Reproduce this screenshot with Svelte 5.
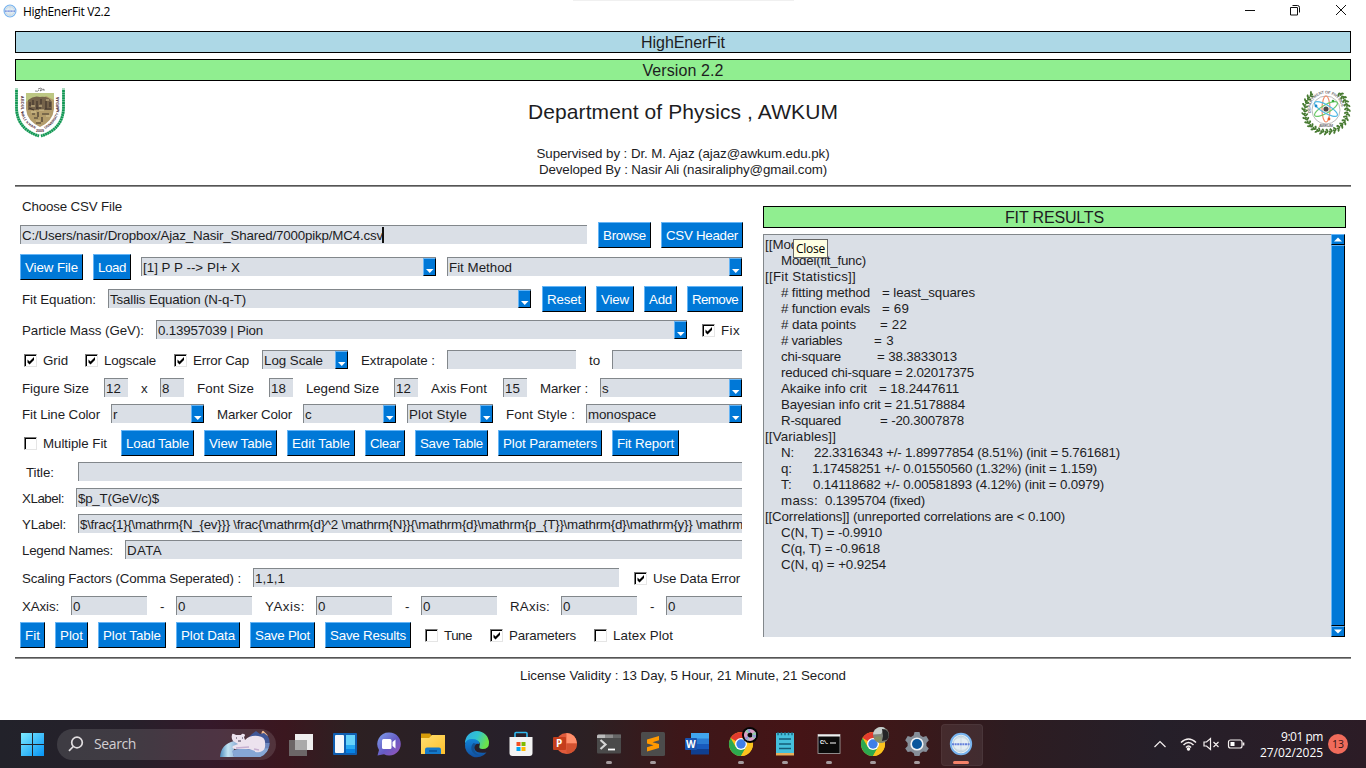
<script>
  // Spreads the letters of a text so that its line has the given width.
  function fit(node, width) {
    const set = (w) => {
      node.style.letterSpacing = '0px';
      const n = node.textContent.length;
      const natural = node.getBoundingClientRect().width;
      node.style.letterSpacing = (w - natural) / n + 'px';
    };
    set(width);
    return { update: set };
  }

  // Each item: [kind, left, right, text, text width]
  const rows = [
    { top: 0, items: [['label', 22, 122, 'Choose CSV File']] },
    { top: 3, items: [['caret', 20, 587, 'C:/Users/nasir/Dropbox/Ajaz_Nasir_Shared/7000pikp/MC4.csv', 361], ['btn', 598, 651, 'Browse'], ['btn', 661, 743, 'CSV Header']] },
    { top: 6, items: [['btn', 20, 83, 'View File'], ['btn', 93, 131, 'Load'], ['combo', 141, 436, '[1] P P --> PI+ X', 97], ['combo', 447, 742, 'Fit Method', 63]] },
    { top: 6, items: [['label', 22, 96, 'Fit Equation:'], ['combo', 108, 531, 'Tsallis Equation (N-q-T)', 136], ['btn', 542, 586, 'Reset'], ['btn', 596, 634, 'View'], ['btn', 644, 677, 'Add'], ['btn', 687, 743, 'Remove']] },
    { top: 5, items: [['label', 22, 144, 'Particle Mass (GeV):'], ['combo', 156, 687, '0.13957039 | Pion', 105], ['on', 702, 715], ['label', 721, 740, 'Fix']] },
    { top: 4, items: [['on', 24, 37], ['label', 43, 68, 'Grid'], ['on', 85, 98], ['label', 104, 156, 'Logscale'], ['on', 174, 187], ['label', 193, 249, 'Error Cap'], ['combo', 262, 348, 'Log Scale', 59], ['label', 361, 435, 'Extrapolate :'], ['field', 447, 576, ''], ['label', 589, 600, 'to'], ['field', 612, 742, '']] },
    { top: 2, items: [['label', 22, 89, 'Figure Size'], ['field', 104, 128, '12', 15], ['label', 141, 148, 'x'], ['field', 160, 184, '8', 8], ['label', 197, 254, 'Font Size'], ['field', 269, 293, '18', 15], ['label', 306, 379, 'Legend Size'], ['field', 394, 418, '12', 15], ['label', 431, 487, 'Axis Font'], ['field', 503, 527, '15', 15], ['label', 540, 588, 'Marker :'], ['combo', 600, 742, 's', 7]] },
    { top: 0, items: [['label', 22, 100, 'Fit Line Color'], ['combo', 111, 204, 'r', 5], ['label', 217, 292, 'Marker Color'], ['combo', 303, 396, 'c', 7], ['combo', 407, 493, 'Plot Style', 58], ['label', 506, 575, 'Font Style :'], ['combo', 586, 742, 'monospace', 68]] },
    { top: 3, items: [['off', 24, 37], ['label', 43, 107, 'Multiple Fit'], ['btn', 121, 194, 'Load Table'], ['btn', 204, 277, 'View Table'], ['btn', 287, 355, 'Edit Table'], ['btn', 365, 405, 'Clear'], ['btn', 415, 488, 'Save Table'], ['btn', 498, 602, 'Plot Parameters'], ['btn', 612, 679, 'Fit Report']] },
    { top: 3, items: [['label', 26, 54, 'Title:'], ['field', 78, 742, '']] },
    { top: 0, items: [['label', 22, 64, 'XLabel:'], ['field', 76, 742, '$p_T(GeV/c)$', 81]] },
    { top: 0, items: [['label', 22, 66, 'YLabel:'], ['field', 78, 742, '$\\frac{1}{\\mathrm{N_{ev}}} \\frac{\\mathrm{d}^2 \\mathrm{N}}{\\mathrm{d}\\mathrm{p_{T}}\\mathrm{d}\\mathrm{y}} \\mathrm', 663]] },
    { top: 0, items: [['label', 22, 113, 'Legend Names:'], ['field', 125, 742, 'DATA', 35]] },
    { top: 2, items: [['label', 22, 241, 'Scaling Factors (Comma Seperated) :'], ['field', 253, 619, '1,1,1', 30], ['on', 634, 647], ['label', 653, 740, 'Use Data Error']] },
    { top: 2, items: [['label', 22, 59, 'XAxis:'], ['field', 71, 147, '0', 8], ['label', 160, 165, '-'], ['field', 176, 252, '0', 8], ['label', 265, 305, 'YAxis:'], ['field', 316, 392, '0', 8], ['label', 405, 410, '-'], ['field', 421, 497, '0', 8], ['label', 510, 550, 'RAxis:'], ['field', 561, 637, '0', 8], ['label', 650, 655, '-'], ['field', 666, 742, '0', 8]] },
    { top: 3, items: [['btn', 20, 45, 'Fit'], ['btn', 55, 88, 'Plot'], ['btn', 98, 166, 'Plot Table'], ['btn', 176, 240, 'Plot Data'], ['btn', 250, 315, 'Save Plot'], ['btn', 325, 411, 'Save Results'], ['off', 425, 438], ['label', 444, 472, 'Tune'], ['on', 490, 503], ['label', 509, 576, 'Parameters'], ['off', 594, 607], ['label', 613, 673, 'Latex Plot']] }
  ];

  // Each line is a list of pieces: [left, right, text]
  const report = [
    [[765, 816, '[[Model]]']],
    [[781, 866, 'Model(fit_func)']],
    [[765, 856, '[[Fit Statistics]]']],
    [[781, 870, '# fitting method'], [882, 975, '= least_squares']],
    [[781, 870, '# function evals'], [882, 909, '= 69']],
    [[781, 856, '# data points'], [880, 907, '= 22']],
    [[781, 842, '# variables'], [874, 894, '= 3']],
    [[781, 841, 'chi-square'], [877, 957, '= 38.3833013']],
    [[781, 974, 'reduced chi-square = 2.02017375']],
    [[781, 867, 'Akaike info crit'], [879, 959, '= 18.2447611']],
    [[781, 965, 'Bayesian info crit = 21.5178884']],
    [[781, 841, 'R-squared'], [880, 964, '= -20.3007878']],
    [[765, 836, '[[Variables]]']],
    [[781, 794, 'N:'], [814, 1120, '22.3316343 +/- 1.89977854 (8.51%) (init = 5.761681)']],
    [[781, 792, 'q:'], [812, 1097, '1.17458251 +/- 0.01550560 (1.32%) (init = 1.159)']],
    [[781, 792, 'T:'], [813, 1104, '0.14118682 +/- 0.00581893 (4.12%) (init = 0.0979)']],
    [[781, 818, 'mass:'], [825, 925, '0.1395704 (fixed)']],
    [[765, 1065, '[[Correlations]] (unreported correlations are < 0.100)']],
    [[781, 882, 'C(N, T) = -0.9910']],
    [[781, 880, 'C(q, T) = -0.9618']],
    [[781, 886, 'C(N, q) = +0.9254']]
  ];

  const gap = (list, i, first, at) => list[i][at] - (i ? list[i - 1][at + 1] : first);
  const leaves = Array.from({ length: 25 }, (_, i) => -48 + i * 11.5);
</script>

{#snippet chrome()}
  <circle cx="12" cy="12" r="12" fill="#fbc116" />
  <path d="M12 12 1.6 6A12 12 0 0 1 22.4 6H12z" fill="#e33b2e" />
  <path d="M1.6 6A12 12 0 0 0 12 24l5.2-9L12 12 6.8 15z" fill="#2da94f" />
  <path d="M12 6h10.4A12 12 0 0 1 12 24l5.2-9z" fill="#fcc31e" />
  <circle cx="12" cy="12" r="6" fill="#fff" />
  <circle cx="12" cy="12" r="4.7" fill="#3f7fe8" />
{/snippet}

{#snippet appMark()}
  <circle cx="12" cy="12" r="10.2" fill="#e3edf3" stroke="#78b4ef" stroke-width="1.9" />
  <circle cx="12" cy="12" r="7.8" fill="none" stroke="#b4c9d6" stroke-width=".8" />
  <path d="M5 8q7-5 14 0M5 16q7 5 14 0M12 3v18" fill="none" stroke="#c3d3dc" stroke-width=".7" />
  <path d="M3 12.3h18" stroke="#6480dc" stroke-width="2" stroke-dasharray="2 .6" />
{/snippet}

<div class="screen">
  <header class="titlebar">
    <svg class="mark" viewBox="0 0 24 24">{@render appMark()}</svg>
    <span class="caption"><span use:fit={87}>HighEnerFit V2.2</span></span>
    <i class="handle"></i>
    <svg class="winctl" viewBox="0 0 102 12" fill="none" stroke="#111" stroke-width="1">
      <path d="M0 6.5h10" />
      <path d="M45.5 3.5h7v7.500h-7zM47.500 1.500h5q2 0 2 2v5" />
      <path d="m91 1 10 10m0-10-10 10" />
    </svg>
  </header>

  <div class="banner blue"><span use:fit={84}>HighEnerFit</span></div>
  <div class="banner green"><span use:fit={81}>Version 2.2</span></div>

  <section class="about">
    <svg class="shield" viewBox="0 0 50 50">
      <path d="M1.500 1v20Q2 42 24 49M48.500 1v20Q48 42 26 49" fill="none" stroke="#a9dcc0" stroke-width="3" />
      <path d="M1.500 3v18Q2 42 24 49M48.500 3v18Q48 42 26 49" fill="none" stroke="#119653" stroke-width="2.700" stroke-dasharray="1.900 .5" />
      <path d="M20 4q3 1 4-1m1 1q2-1 4-2v2m-6-2 3-1m-1 3 2-3" stroke="#555" fill="none" stroke-width=".7" />
      <path d="M11 6h28v16q-1 12-14 18Q12 34 11 22z" fill="#b39c6a" />
      <path d="M11 6h28v7l-8-4-6 4-7-2-7 4z" fill="#bdc783" />
      <path d="M13 13q6-5 12-3 9-1 12 5v8H13z" fill="#75634a" />
      <path d="M15 15v4m3-6v5m4-4v8m4-10v5m5-3v8m4-7v5M14 21l5 2m2-2h5m4 1h6M17 27h3m3-2v5m4-3h7m-15 4h4m4-1v5m-6 1h5" stroke="#42362d" stroke-width="1.200" fill="none" />
      <path d="M16 19h4m4 0h3m4-6h3m-18 12h5m3-2h5m2 6h4m-14 5h4" stroke="#d8c594" stroke-width="1.200" />
      <path id="motto-left" d="M5.500 9v13Q7 36 20 42" fill="none" />
      <path id="motto-right" d="M30 42Q42 36 44.500 22V7" fill="none" />
      <text class="motto"><textPath href="#motto-left" textLength="39">ABDUL WALI KHAN</textPath></text>
      <text class="motto"><textPath href="#motto-right" textLength="38">UNIVERSITY MARDAN</textPath></text>
      <text class="motto" x="21" y="44.500">2009</text>
    </svg>
    <div class="who">
      <h1><span use:fit={310}>Department of Physics , AWKUM</span></h1>
      <p><span use:fit={293}>Supervised by : Dr. M. Ajaz (ajaz@awkum.edu.pk)</span></p>
      <p><span use:fit={288}>Developed By : Nasir Ali (nasiraliphy@gmail.com)</span></p>
    </div>
    <svg class="physics" viewBox="0 0 50 44">
      {#each leaves as a}
        <g transform="rotate({a} 25 20.500) translate(25 20.500)">
          <path d="M18.500 0q3-3 3.500-.5M20.500 1q3-2 3.500 1" fill="none" stroke="#477a31" stroke-width="1.800" />
        </g>
      {/each}
      <circle cx="25" cy="20.500" r="18" fill="#fff" />
      <circle cx="25" cy="20" r="14" fill="none" stroke="#aaa" stroke-width=".8" />
      <path id="dept" d="M10 23A15.500 15.500 0 1 1 40 23" fill="none" />
      <text class="dept"><textPath href="#dept" textLength="50">DEPARTMENT OF PHYSICS</textPath></text>
      <text class="dept" x="18" y="37" textLength="14">AWKUM</text>
      <g fill="none" stroke-width="1.200">
        <ellipse cx="25" cy="19" rx="4" ry="13" stroke="#f18e69" />
        <ellipse cx="25" cy="19" rx="4" ry="13" stroke="#6cc96a" transform="rotate(60 25 19)" />
        <ellipse cx="25" cy="19" rx="4" ry="13" stroke="#51b9e5" transform="rotate(-60 25 19)" />
      </g>
      <circle cx="25" cy="19" r="2.600" fill="#494949" />
      <circle cx="15" cy="16" r="1.400" fill="#168ad1" /><circle cx="32" cy="11" r="1.300" fill="#38aa39" /><circle cx="28" cy="29" r="1.400" fill="#e9602a" />
    </svg>
  </section>

  <hr />

  <main>
    <section class="form">
      {#each rows as row}
        <div class="row" style="margin-top: {row.top}px">
          {#each row.items as [kind, left, right, text, tw], i}
            <div class="item {kind}" style="margin-left: {gap(row.items, i, 20, 1)}px; width: {right - left}px">
              {#if kind === 'on' || kind === 'off'}
                {#if kind === 'on'}
                  <svg viewBox="0 0 13 13"><path d="M3.500 5.500v3l2 2 4.500-4.500v-3l-4.500 4.500z" fill="#000" /></svg>
                {/if}
              {:else if kind === 'btn'}
                <span use:fit={right - left - 10}>{text}</span>
              {:else if kind === 'label'}
                <span use:fit={right - left}>{text}</span>
              {:else}
                {#if text}<span use:fit={tw}>{text}</span>{/if}
                {#if kind === 'caret'}<i class="bar"></i>{/if}
                {#if kind === 'combo'}
                  <b class="drop"><svg viewBox="0 0 11 16"><path d="M2 10h7.500L5.750 14z" fill="#fff" /></svg></b>
                {/if}
              {/if}
            </div>
          {/each}
        </div>
      {/each}
    </section>

    <section class="results">
      <div class="banner green"><span use:fit={99}>FIT RESULTS</span></div>
      <div class="output">
        <div class="text">
          {#each report as line}
            <div class="line">
              {#each line as [left, right, text], i}
                <span class="piece" style="margin-left: {gap(line, i, 765, 0)}px; width: {right - left}px"><span use:fit={right - left}>{text}</span></span>
              {/each}
            </div>
          {/each}
          <div class="tooltip"><span use:fit={29}>Close</span></div>
        </div>
        <div class="scroll">
          <i><svg viewBox="0 0 12 9"><path d="M2 6.500h8L6 2.500z" fill="#fff" /></svg></i>
          <i class="thumb"></i>
          <i><svg viewBox="0 0 12 9"><path d="M2 2.500h8L6 6.500z" fill="#fff" /></svg></i>
        </div>
      </div>
    </section>
  </main>

  <hr />
  <p class="license"><span use:fit={326}>License Validity : 13 Day, 5 Hour, 21 Minute, 21 Second</span></p>

  <footer>
    <svg class="start" viewBox="0 0 24 24">
      <defs><linearGradient id="win" x1="0" y1="0" x2="24" y2="24" gradientUnits="userSpaceOnUse"><stop stop-color="#83efff" /><stop offset="1" stop-color="#0593f5" /></linearGradient></defs>
      <path d="M1 1h11v11H1zM13 1h11v11H13zM1 13h11v11H1zM13 13h11v11H13z" fill="url(#win)" />
    </svg>
    <div class="search">
      <svg class="lens" viewBox="0 0 16 16" fill="none" stroke="#e2dfe1" stroke-width="1.700"><circle cx="9" cy="6.500" r="5.300" /><path d="m5.300 10.500-4.300 4.300" /></svg>
      <span class="hint"><span use:fit={42}>Search</span></span>
      <svg class="bear" viewBox="0 0 56 30">
        <defs>
          <clipPath id="pill"><path d="M0 0h40a15 15 0 0 1 0 28H0z" /></clipPath>
          <linearGradient id="ice" x2="1"><stop stop-color="#4a8abc" /><stop offset=".4" stop-color="#c3e4f3" /><stop offset="1" stop-color="#7798c8" /></linearGradient>
        </defs>
        <g clip-path="url(#pill)">
          <circle cx="45" cy="4.500" r="3.500" fill="#f4bd91" />
          <path d="m24 13 8-8 4-3 4 3 4-1 5 4 4-1 5 6v4H20z" fill="#405797" />
          <path d="M36 14h20v14H12z" fill="#6c86be" />
          <path d="M0 28q1-13 14-16l6 2q-9 5-6 14z" fill="url(#ice)" />
          <path d="M12 22q7-4 19-1l20-2-5 9H14z" fill="#86a7d5" />
        </g>
        <path d="M12 6q0-2 2-1l2 1h5q1-2 3-1t0 3l1 3q5-5 13-4 8 1 7 8 1 6-5 8-6 1-5-1l-6-2-14 0q-4-1-2-3l5-2-5-3q-2-3-1-6z" fill="#ece2ee" />
        <path d="M16 19l13-1M34 20l5 1" stroke="#c6afd0" stroke-width="1.300" fill="none" />
        <path d="M18 12h3m-5-3h1m5 0h1" stroke="#3e344d" stroke-width="1.200" />
      </svg>
    </div>

    <nav>
      <div class="slot"><svg viewBox="0 0 24 24"><path d="M6 2h18v16H6z" fill="#eee" /><path d="M0 8h18v16H0z" fill="#777" opacity=".82" /><path d="M6 8h12v10H6z" fill="#aaa" /></svg></div>
      <div class="slot"><svg viewBox="0 0 24 24"><rect y="1" width="24" height="22" rx="1" fill="#0f5eb0" /><rect x="2" y="3" width="9" height="18" rx="1" fill="#f6f8fb" /><path d="M13 3h9v10h-9z" fill="#67d3fa" /><path d="M13 13h9v4h-9z" fill="#27aaf2" /><path d="M13 17h9v4h-9z" fill="#0784e5" /></svg></div>
      <div class="slot"><svg viewBox="0 0 24 24"><defs><linearGradient id="chat" x2="1" y2="1"><stop stop-color="#7ea1ed" /><stop offset=".55" stop-color="#665bc4" /><stop offset="1" stop-color="#9c53b8" /></linearGradient></defs><path d="M12 .5a11.500 11.500 0 1 1-5 21.700L.5 23.500 2 18A11.500 11.500 0 0 1 12 .5z" fill="url(#chat)" /><rect x="5" y="7" width="9.500" height="10" rx="1.500" fill="#fff" /><path d="m15.500 10 3-2.500v9l-3-2.500z" fill="#fff" /></svg></div>
      <div class="slot"><svg viewBox="0 0 24 24"><defs><linearGradient id="dir" x2="1" y2="1"><stop stop-color="#ffdf72" /><stop offset="1" stop-color="#ffc02b" /></linearGradient></defs><path d="M0 1.500h9l2 2.500V8H0z" fill="#d79b08" /><path d="M0 6h8l3-3h13v19H0z" fill="url(#dir)" /><path d="M4 22v-4.500q0-2 2-2h12q2 0 2 2V22z" fill="#1479c9" /><path d="M8 19h8" stroke="#0a4f94" stroke-width="1.500" /></svg></div>
      <div class="slot"><svg viewBox="0 0 24 24"><defs><linearGradient id="edge" x2="1" y2=".35"><stop stop-color="#2fa9e7" /><stop offset=".55" stop-color="#31c4cf" /><stop offset="1" stop-color="#6be34b" /></linearGradient><linearGradient id="edge2" x2="0" y2="1"><stop stop-color="#1284d8" /><stop offset="1" stop-color="#1250a0" /></linearGradient></defs><path d="M0 11A12 12 0 0 1 24 11q0 6-6.500 6-4 0-3-3 2-5-5-5.500Q4 8 0 11z" fill="url(#edge)" /><path d="M0 12q1-5 7-5 7 0 7.500 5-7-1-5 5 2 5 12 3.500A12 12 0 0 1 0 12z" fill="url(#edge2)" /><path d="M8.500 11q-4 4-1 9 4 5 11 2.500-5 2-8-2-3-5 1-8.500z" fill="#125294" /></svg></div>
      <div class="slot"><svg viewBox="0 0 24 24"><path d="M6 6V1.500q0-1 1-1h10q1 0 1 1V6" fill="none" stroke="#30b9ef" stroke-width="1.600" /><path d="M.5 5h23v16q0 3-3 3h-17q-3 0-3-3z" fill="#f3f3f3" /><path d="M7.500 10h4v4h-4z" fill="#f25022" /><path d="M12.500 10h4v4h-4z" fill="#7fba00" /><path d="M7.500 15h4v4h-4z" fill="#00a4ef" /><path d="M12.500 15h4v4h-4z" fill="#ffb900" /></svg></div>
      <div class="slot"><svg viewBox="0 0 24 24"><circle cx="13.500" cy="11.500" r="10.500" fill="#e05b3c" /><path d="M13.500 1A10.500 10.500 0 0 1 24 11.500H13.500z" fill="#ff8f6b" /><path d="M13.500 11.500H24A10.500 10.500 0 0 1 13.500 22z" fill="#d35230" /><rect y="5" width="13" height="13" rx="1" fill="#c43e1c" /><text class="letter" x="3" y="15">P</text></svg></div>
      <div class="slot run"><svg viewBox="0 0 24 24"><rect y="2.500" width="24" height="19" rx="1" fill="#4a4a4a" /><path d="M0 6V4q0-1.500 1.500-1.500H8V6z" fill="#bbb" /><path d="M8 2.500h8V6H8z" fill="#8c8c8c" /><path d="M16 2.500h8V6h-8z" fill="#666" /><path d="m3.500 8 5 4.500-5 4.500" fill="none" stroke="#d5d5d5" stroke-width="2.200" /><path d="M11 17.500h7" stroke="#fff" stroke-width="1.800" /></svg></div>
      <div class="slot run"><svg viewBox="0 0 24 24"><rect width="24" height="24" rx="1.500" fill="#4c4c4c" /><path d="M18 4v4.200L11.500 10.200 18 12v4L6 19.500v-4.200l6.500-2L6 11.500v-4z" fill="#ff9800" /></svg></div>
      <div class="slot"><svg viewBox="0 0 24 24"><path d="M6 1h18v6H6z" fill="#41a5ee" /><path d="M6 6.500h18V12H6z" fill="#2b7cd3" /><path d="M6 12h18v5.500H6z" fill="#185abd" /><path d="M6 17h18v5.500H6z" fill="#103f91" /><rect y="6" width="12" height="12" rx="1" fill="#1853ae" /><text class="letter" x="1" y="15.500">W</text></svg></div>
      <div class="slot run"><svg viewBox="0 0 24 24">{@render chrome()}<circle cx="21" cy="3" r="8" fill="#050505" /><circle cx="21" cy="3" r="4.300" fill="none" stroke="#d9a0c5" stroke-width="3.600" /><circle cx="21" cy="3" r="4.300" fill="none" stroke="#8fcbab" stroke-width="3.600" stroke-dasharray="3 5" /><circle cx="21" cy="3" r="4.300" fill="none" stroke="#9a91dd" stroke-width="3.600" stroke-dasharray="2 7" /></svg></div>
      <div class="slot run"><svg viewBox="0 0 24 24"><path d="M3 1h18v21H3z" fill="#45bfdc" /><path d="M3 21h18v2.500H3z" fill="#e9ad59" /><path d="M6 7h12M6 12h12M6 16.500h12" stroke="#145c78" stroke-width="1.400" /><path d="M5 .2v3m3.500-3v3m3.500-3v3m3.500-3v3m3.500-3v3" stroke="#1b6c86" stroke-width="1.500" /></svg></div>
      <div class="slot run"><svg viewBox="0 0 24 24"><rect x="1" y="2.500" width="22" height="19" fill="#0a0a0a" stroke="#aaa" stroke-width=".8" /><path d="M1 3.500h22" stroke="#eee" stroke-width="2" /><text class="prompt" x="3" y="11.500" textLength="9">C:\.</text><path d="M13 11h6" stroke="#fff" /></svg></div>
      <div class="slot run"><svg viewBox="0 0 24 24">{@render chrome()}<circle cx="20" cy="3" r="8" fill="#80857b" /><path d="M12 2.500A8 8 0 0 1 24-3.800L20 2z" fill="#c6cdcb" /><path d="M21-3q4 0 6 3 2 5-1.500 8L21 9l1-5z" fill="#242526" /><path d="M13 6q4-3 7-1l1 6q-6 0-8-5z" fill="#879064" /></svg></div>
      <div class="slot run"><svg viewBox="0 0 24 24"><path d="m9.500 0-.8 3.300L6 5 2.700 4 .2 8.300 2.600 11v3L.2 16.500 2.700 20 6 19.500l2.700 1.700.8 2.800h5l.8-2.800 2.700-1.700 3.300.5 2.500-3.500-2.400-2.500v-3l2.400-2.700L21.300 4 18 5l-2.700-1.700L14.500 0z" fill="#858e98" /><circle cx="12" cy="12" r="6.600" fill="#eef2f5" /><circle cx="12" cy="12" r="5" fill="#08569c" /></svg></div>
      <div class="slot active"><svg viewBox="0 0 24 24">{@render appMark()}</svg></div>
    </nav>

    <div class="tray">
      <svg class="tray-icons" viewBox="0 0 92 16" fill="none" stroke="#f4efef" stroke-width="1.200">
        <path d="m1.500 11 5.500-5.500L12.500 11" />
        <path d="M28 6.500q7.500-7 15 0M30.500 9q5-5 10 0M33 11.500q2.500-2.800 5 0" stroke-width="1.500" />
        <circle cx="35.500" cy="13" r="1.200" fill="#fff" />
        <path d="M51 6h2.500l4-3.500v11l-4-3.500H51zM60.500 6l5 5m0-5-5 5" />
        <rect x="75.500" y="4" width="13.500" height="8" rx="2" /><path d="M90.500 6.500v3" stroke-width="1.700" /><path d="M77.500 6h4v4h-4z" fill="#fff" stroke="none" />
      </svg>
      <div class="clock"><span><span use:fit={42}>9:01 pm</span></span><span><span use:fit={63}>27/02/2025</span></span></div>
      <div class="badge">13</div>
    </div>
  </footer>
</div>

<style>
  :global(body) { margin: 0; overflow: hidden; background: #fff; }
  * { box-sizing: border-box; }
  .screen { width: 1366px; height: 768px; display: flex; flex-direction: column; background: #fff; color: #1d1d1f; font: 13.33px/16px "Liberation Sans", Arial, sans-serif; overflow: hidden; }
  span { white-space: pre; display: inline-block; flex: none; }
  svg { display: block; overflow: visible; flex: none; }
  p, h1, hr { margin: 0; }

  .titlebar { height: 31px; padding: 0 19px 0 3px; display: flex; align-items: flex-start; position: relative; flex: none; }
  .mark { width: 14px; height: 14px; margin-top: 4px; }
  .caption { margin: 4px 0 0 6px; flex: 1; font: 12px/16px "Open Sans", sans-serif; color: #000; }
  .winctl { width: 102px; height: 12px; margin-top: 4px; }
  .handle { position: absolute; left: 573px; top: 0; width: 221px; height: 1px; background: #f0f0f0; }

  .banner { height: 22px; margin: 0 15px 6px; border: 1px solid #000; display: flex; justify-content: center; align-items: center; font-size: 16px; line-height: 18px; flex: none; }
  .banner span { padding-top: 2px; }
  .blue { background: #add8e6; }
  .green { background: #90ee90; }

  .about { height: 98px; margin: 0 15px; display: flex; justify-content: space-between; flex: none; }
  .shield { width: 50px; height: 50px; }
  .physics { width: 50px; height: 44px; margin-top: 3px; }
  .motto { font: bold 3.6px "Liberation Sans", sans-serif; fill: #47242b; }
  .dept { font: bold 4px "Liberation Sans", sans-serif; fill: #777; }
  .who { display: flex; flex-direction: column; align-items: center; }
  h1 { font-size: 21px; line-height: 24px; font-weight: 400; margin: 13px 0 22px; }
  hr { height: 2px; border: 0; margin: 0 15px; border-top: 1px solid #555; background: #8c8c8c; flex: none; }

  main { display: flex; gap: 20px; height: 470px; padding: 0 20px; flex: none; }
  .form { width: 723px; padding-top: 6px; flex: none; }
  .row { height: 26px; display: flex; align-items: center; }
  .item { height: 19px; margin-bottom: 1px; flex: none; display: flex; align-items: center; white-space: pre; }
  .item > span { padding-top: 2px; }
  .label > span { padding-top: 3px; }
  .field, .combo, .caret { background: #dadfe6; border-top: 1px solid #82878b; border-left: 1px solid #82878b; padding-left: 1px; overflow: hidden; }
  .bar { width: 2px; height: 16px; background: #111; margin-left: -1px; }
  .btn { height: 26px; margin-bottom: 0; justify-content: center; background: #0078d7; color: #fff; border: 1px solid; border-color: #66b5f6 #000 #000 #66b5f6; }
  .on, .off { height: 13px; margin: 1px 0 0; background: #fff; border: 1px solid; border-color: #777 #e5e5e5 #e5e5e5 #777; box-shadow: inset 1px 1px #000; }
  .on svg { width: 13px; height: 13px; margin-left: -1px; }
  .drop { width: 13px; height: 18px; margin-left: auto; background: #0078d7; border: 1px solid; border-color: #66b5f6 #000 #000 #66b5f6; flex: none; }
  .drop svg { width: 11px; height: 16px; }

  .results { width: 583px; padding-top: 19px; flex: none; }
  .results .banner { margin: 0 0 6px; }
  .output { height: 403px; display: flex; }
  .text { width: 568px; position: relative; background: #dadfe6; border-top: 1px solid #82878b; border-left: 1px solid #82878b; padding: 2px 0 0 1px; }
  .line { display: flex; height: 16px; }
  .tooltip { position: absolute; left: 29px; top: 4px; width: 35px; height: 19px; background: #ffffe1; border: 1px solid #666; font: 12px/18px "Open Sans", sans-serif; color: #000; padding-left: 2px; }
  .scroll { width: 14px; display: flex; flex-direction: column; background: #dadfe6; }
  .scroll i { height: 11px; background: #0078d7; border: 1px solid; border-color: #66b5f6 #000 #000 #66b5f6; }
  .scroll svg { width: 12px; height: 9px; }
  .scroll .thumb { flex: 1; }

  .license { text-align: center; padding-top: 9px; height: 61px; flex: none; }

  footer { height: 48px; flex: none; display: flex; align-items: center; background: linear-gradient(90deg, #22222a 0, #26202a 130px, #35192a 210px, #3b171f 285px, #2d2022 350px, #27202a 510px, #2c2023 590px, #3d1719 680px, #451416 800px, #3c1819 900px, #2d1c21 1010px, #251f29 1160px, #2c1c26 1366px); color: #fff; font-family: "Open Sans", sans-serif; }
  .start { width: 24px; height: 24px; margin-left: 20px; }
  .search { width: 219px; height: 31px; margin-left: 13px; border-radius: 16px; background: rgba(255, 255, 255, .12); display: flex; align-items: center; }
  .lens { width: 16px; height: 16px; margin-left: 11px; }
  .hint { font-size: 14px; line-height: 20px; color: #d3cfd2; margin-left: 10px; }
  .bear { width: 56px; height: 30px; margin-left: auto; }
  nav { display: flex; margin-left: 3px; }
  .slot { width: 44px; height: 44px; display: flex; justify-content: center; align-items: center; position: relative; flex: none; }
  .slot svg { width: 24px; height: 24px; }
  .run::after, .active::after { content: ""; position: absolute; left: 19px; bottom: 2px; width: 6px; height: 3px; border-radius: 2px; background: #a49b9e; }
  .active::before { content: ""; position: absolute; left: 2px; top: 2px; width: 40px; height: 40px; border-radius: 4px; background: rgba(255, 255, 255, .08); border: 1px solid rgba(255, 255, 255, .05); }
  .active::after { left: 14px; width: 16px; background: #f48269; }
  .active svg { position: relative; }
  .letter { font: bold 10px "Open Sans", sans-serif; fill: #fff; }
  .prompt { font: bold 6px "Liberation Mono", monospace; fill: #fff; }
  .tray { margin-left: auto; display: flex; align-items: center; padding-right: 18px; }
  .tray-icons { width: 92px; height: 16px; margin-right: 14px; }
  .clock { display: flex; flex-direction: column; align-items: flex-end; font-size: 12px; line-height: 16px; margin-right: 5px; width: 64px; padding-top: 1px; }
  .badge { width: 20px; height: 20px; border-radius: 50%; background: #f06b5b; color: #331312; font-size: 10.5px; line-height: 20px; text-align: center; }
</style>
